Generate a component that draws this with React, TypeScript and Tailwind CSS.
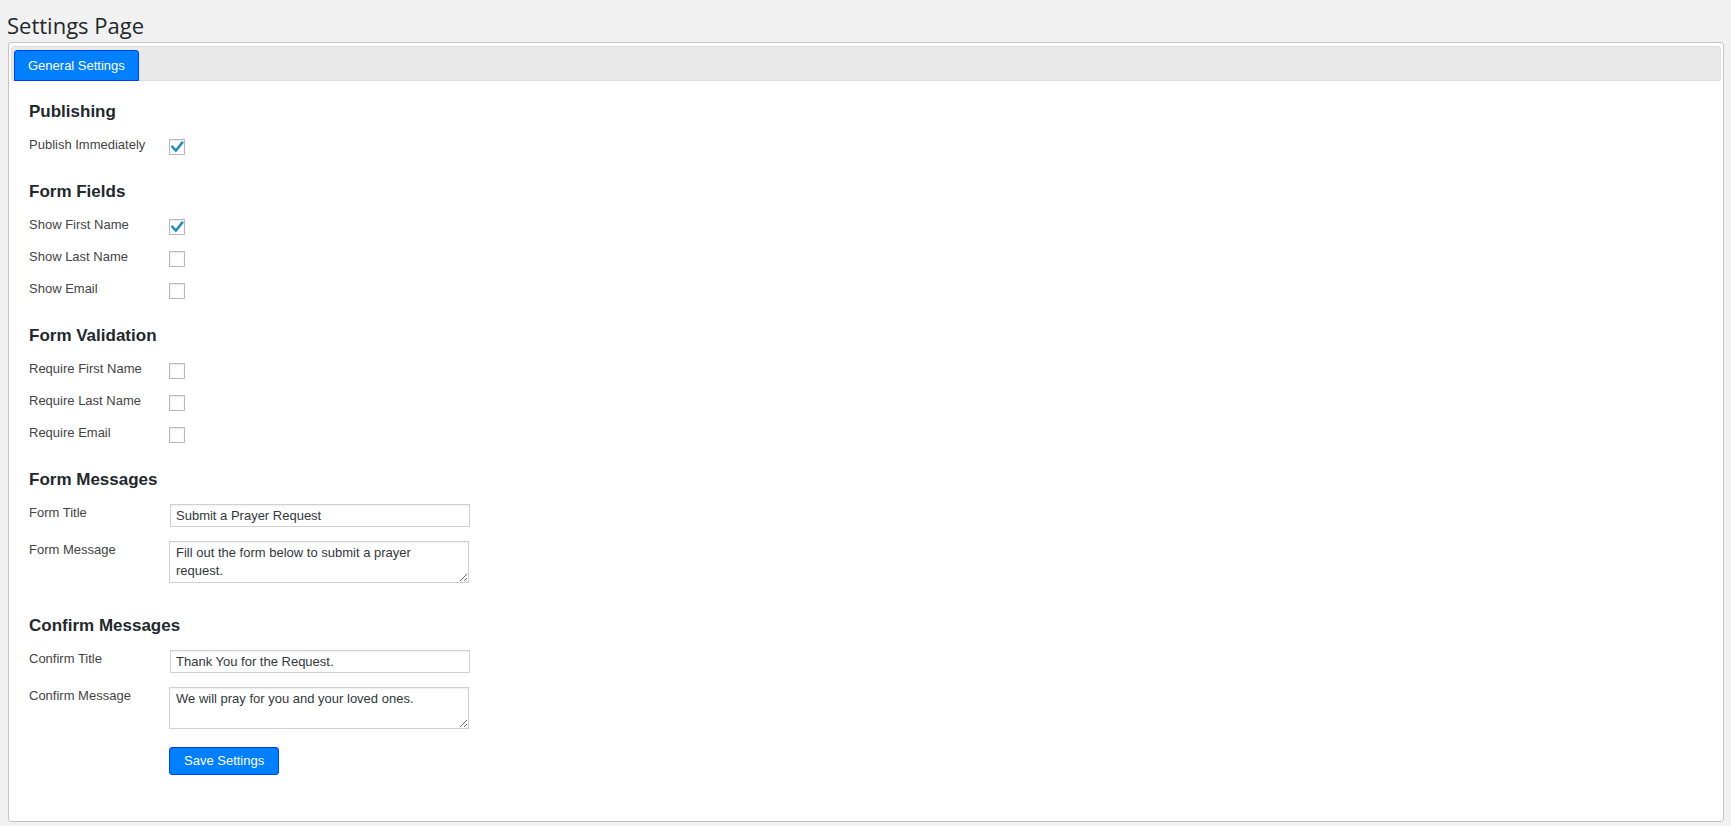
import { ReactNode } from 'react';

const sans = { fontFamily: '"Liberation Sans", Arial, Helvetica, sans-serif' };

function Check({ checked }: { checked?: boolean }) {
  return (
    <span className="mt-[3px] flex h-[16px] w-[16px] items-center justify-center border border-[#b4b9be] bg-white shadow-[inset_0_1px_2px_rgba(0,0,0,0.1)]">
      {checked && (
        <svg width="16" height="16" viewBox="0 0 16 16" className="-m-px">
          <path d="M3.4 7.8 L6.9 11.6 L13.2 3.8" fill="none" stroke="#1e8cbe" strokeWidth="2.4" strokeLinecap="square" />
        </svg>
      )}
    </span>
  );
}

function Heading({ children, className = '' }: { children: ReactNode; className?: string }) {
  return <h3 className={`text-[17px] leading-[20px] font-bold text-[#23282d] ${className}`}>{children}</h3>;
}

function CheckRow({ label, checked }: { label: string; checked?: boolean }) {
  return (
    <div className="grid h-[32px] grid-cols-[140px_1fr] items-center">
      <span className="text-[13px] text-[#444]">{label}</span>
      <Check checked={checked} />
    </div>
  );
}

function FieldRow({ label, children, className = '' }: { label: string; children: ReactNode; className?: string }) {
  return (
    <div className={`grid grid-cols-[140px_1fr] items-start ${className}`}>
      <span className="text-[13px] leading-[17px] text-[#444]">{label}</span>
      <div>{children}</div>
    </div>
  );
}

const inputCls =
  'ml-px block h-[23px] w-[300px] border border-[#d1d1d1] bg-white px-[5px] text-[13px] text-[#32373c] shadow-[inset_0_1px_2px_rgba(0,0,0,0.07)] outline-none';
const areaCls =
  'block h-[42px] w-[300px] border border-[#d1d1d1] bg-white pl-[6px] pr-[12px] py-[2px] text-[13px] leading-[18px] text-[#32373c] shadow-[inset_0_1px_2px_rgba(0,0,0,0.07)] outline-none';

export default function App() {
  return (
    <div className="min-h-screen bg-[#f1f1f1] pl-[8px] pr-[7px] pb-[4px]" style={sans}>
      <h1
        className="-ml-[1px] pt-[10px] text-[22px] leading-[30px] font-normal text-[#23282d]"
        style={{ fontFamily: '"Open Sans", "Noto Sans", sans-serif' }}
      >
        Settings Page
      </h1>

      <div className="mt-[2px] rounded-[3px] border border-[#c5c5c5] bg-white px-[2px] pt-[3px]">
        {/* tab bar */}
        <div className="flex h-[35px] items-end rounded-[3px] border border-[#dddddd] bg-[#e9e9e9] px-[2px]">
          <button className="-mb-px h-[31px] rounded-t-[3px] border border-[#003eff] bg-[#007fff] px-[13px] text-[13px] text-white">
            General Settings
          </button>
        </div>

        <div className="px-[18px] pt-[21px] pb-[46px]">
          <Heading>Publishing</Heading>
          <div className="mt-[7px]">
            <CheckRow label="Publish Immediately" checked />
          </div>

          <Heading className="mt-[21px]">Form Fields</Heading>
          <div className="mt-[7px]">
            <CheckRow label="Show First Name" checked />
            <CheckRow label="Show Last Name" />
            <CheckRow label="Show Email" />
          </div>

          <Heading className="mt-[21px]">Form Validation</Heading>
          <div className="mt-[7px]">
            <CheckRow label="Require First Name" />
            <CheckRow label="Require Last Name" />
            <CheckRow label="Require Email" />
          </div>

          <Heading className="mt-[21px]">Form Messages</Heading>
          <FieldRow label="Form Title" className="mt-[14px]">
            <input className={inputCls} defaultValue="Submit a Prayer Request" />
          </FieldRow>
          <FieldRow label="Form Message" className="mt-[14px]">
            <textarea className={areaCls} defaultValue="Fill out the form below to submit a prayer request." />
          </FieldRow>

          <Heading className="mt-[33px]">Confirm Messages</Heading>
          <FieldRow label="Confirm Title" className="mt-[14px]">
            <input className={inputCls} defaultValue="Thank You for the Request." />
          </FieldRow>
          <FieldRow label="Confirm Message" className="mt-[14px]">
            <textarea className={areaCls} defaultValue="We will pray for you and your loved ones." />
          </FieldRow>

          <div className="mt-[18px] grid grid-cols-[140px_1fr]">
            <span />
            <div>
              <button className="h-[28px] rounded-[3px] border border-[#003eff] bg-[#007fff] px-[14px] text-[13px] text-white">
                Save Settings
              </button>
            </div>
          </div>
        </div>
      </div>
    </div>
  );
}
